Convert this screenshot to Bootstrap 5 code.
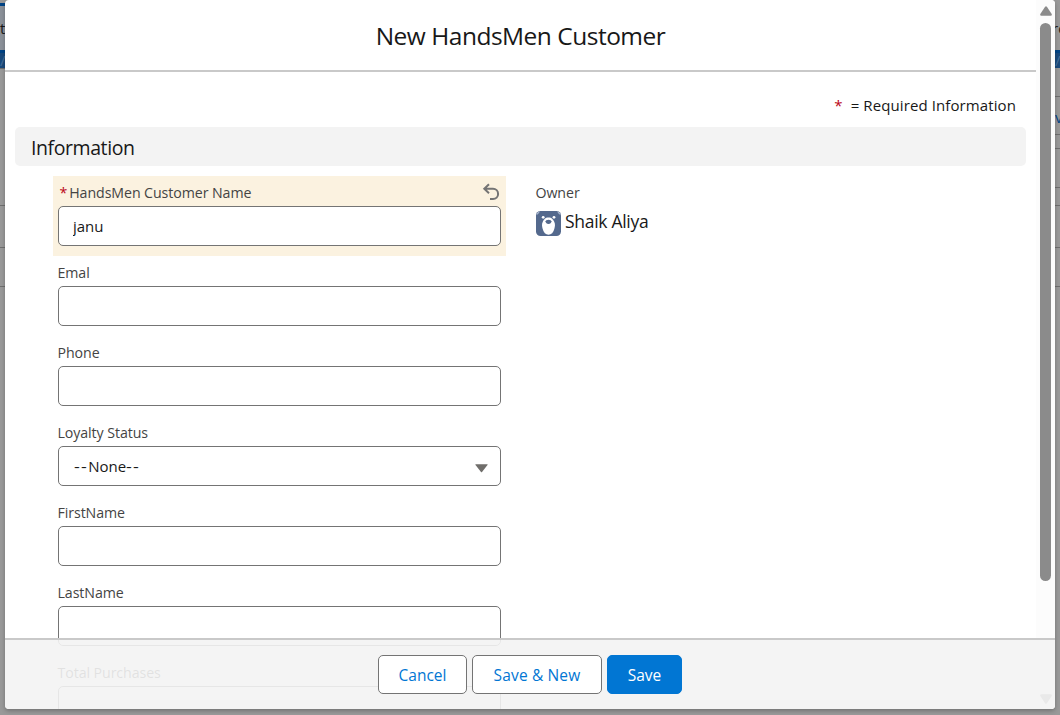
<!DOCTYPE html>
<html lang="en">
<head>
<meta charset="utf-8">
<meta name="viewport" content="width=device-width, initial-scale=1">
<title>New HandsMen Customer</title>
<link href="https://cdn.jsdelivr.net/npm/bootstrap@5.3.0/dist/css/bootstrap.min.css" rel="stylesheet">
<style>
body{font-family:"Open Sans","Noto Sans",sans-serif;background:#999;color:#181818;height:715px;overflow:hidden;font-size:15px;line-height:20px}
.strip{width:5px;height:715px;overflow:hidden;flex:none;background:#999;white-space:nowrap}
.strip>div{flex:none;overflow:hidden}
.s-blue{background:#014486}.s-tab{background:#8b9199}.s-line{background:#6f6f6f;height:1px}.s-band{background:#1a4a7c;color:#456f9b}
.dialog{width:1050px;height:709px;background:#fff;border-radius:4px;box-shadow:0 2px 4px rgba(0,0,0,.25);overflow:hidden}
.dialog-main{width:1031px}
.dialog-head{height:72px;border-bottom:2px solid #c9c9c9;padding-top:18px}
.dialog-head h1{font-size:24.5px;line-height:36px;letter-spacing:-.5px;font-weight:400}
.required-note{height:55px;padding:23px 20px 0 0;font-size:15px;letter-spacing:.1px}
.req{color:#ba0517}
.section-title{margin:0 10px;height:39px;line-height:41px;padding-left:16px;background:#f3f3f3;border-radius:5px;font-size:19.5px;letter-spacing:-.42px;font-weight:400}
.fields{padding:10px 0 0 48px}
.field-cell{width:453px;height:80px;padding:0 5px}
.field-cell.edited{background:#fbf2e0}
.field-label{height:30px;line-height:34px;font-size:14.2px;color:#444;letter-spacing:-.08px;margin-left:-.5px}
.form-control.slds{height:40px;border:1px solid #747474;border-radius:5px;font-size:15px;line-height:20px;padding:9px 14px;color:#181818;background-color:#fff;box-shadow:none}
.select-box{height:40px;border:1px solid #747474;border-radius:5px;padding:0 12px 0 15px;font-size:15px}
.dashes{letter-spacing:1px;display:inline-block;transform:scaleX(1.2);transform-origin:left}
.dashes.lead-in{margin-right:2.500px}
.owner-cell{margin-left:30px}
.owner-name{font-size:17.5px;line-height:24px;letter-spacing:-.3px;padding-top:3px}
.dialog-foot{left:0;right:0;bottom:0;height:71px;border-top:2px solid #c9c9c9;background:rgba(243,243,243,.9);padding:15px 0 0 373px;gap:5px}
.dialog-foot .btn{height:39px;border-radius:5px;font-size:15.5px;line-height:20px;padding:1px 0 0;border:1px solid #747474;background:#fff;color:#0176d3}
.dialog-foot .btn.primary{background:#0176d3;border-color:#0176d3;color:#fff}
.scroller{width:19px;background:#fcfcfc;padding:6px 4px 0;height:709px}
.thumb{width:11px;height:558px;border-radius:6px;background:#8b8b8b;margin-top:6px}
</style>
</head>
<body>
<div class="d-flex">
  <div class="strip d-flex flex-column">
    <div style="height:3px"></div><div class="s-blue" style="height:3px"></div>
    <div class="s-tab" style="height:44px;line-height:44px">t</div>
    <div class="s-blue" style="height:3px"></div><div class="s-band" style="height:15px;line-height:14px">/</div>
    <div class="s-line"></div><div style="height:136px"></div><div class="s-line"></div><div style="height:41px"></div><div class="s-line"></div><div style="height:38px"></div><div class="s-line"></div>
  </div>
  <main class="dialog d-flex position-relative">
    <div class="dialog-main">
      <header class="dialog-head text-center"><h1 class="m-0">New HandsMen Customer</h1></header>
      <div class="required-note text-end"><span class="req me-2">*</span><span>= Required Information</span></div>
      <h2 class="section-title mb-0">Information</h2>
      <div class="fields d-flex">
        <div>
          <div class="field-cell edited">
            <div class="field-label d-flex justify-content-between"><span class="d-flex"><span class="req" style="margin:0 2px 0 2px">*</span><span>HandsMen Customer Name</span></span>
              <svg width="18" height="18" viewBox="0 0 18 18" style="margin:7px 1px 0 0" fill="none" stroke="#747474" stroke-width="2"><path d="M7 1.2 2.3 5.8 7 10.2M2.8 5.8H11a5.1 5.1 0 0 1 0 10.2H8"/></svg>
            </div>
            <input class="form-control slds" value="janu" aria-label="HandsMen Customer Name">
          </div>
          <div class="field-cell"><div class="field-label">Emal</div><input class="form-control slds" aria-label="Emal"></div>
          <div class="field-cell"><div class="field-label">Phone</div><input class="form-control slds" aria-label="Phone"></div>
          <div class="field-cell"><div class="field-label">Loyalty Status</div>
            <div class="select-box d-flex align-items-center justify-content-between"><span><span class="dashes lead-in">--</span>None<span class="dashes">--</span></span><svg width="13" height="9" viewBox="0 0 13 9" style="margin-top:5px"><path d="M.8.3h11.4q.8.1.3.8L7 8q-.5.6-1 0L.5 1.100Q0 .4.800.3z" fill="#706e6b"/></svg></div></div>
          <div class="field-cell"><div class="field-label">FirstName</div><input class="form-control slds" aria-label="FirstName"></div>
          <div class="field-cell"><div class="field-label">LastName</div><input class="form-control slds" aria-label="LastName"></div>
          <div class="field-cell"><div class="field-label">Total Purchases</div><input class="form-control slds" aria-label="Total Purchases"></div>
        </div>
        <div class="owner-cell">
          <div class="field-label">Owner</div>
          <div class="d-flex"><svg width="25" height="25" viewBox="0 0 25 25" style="margin:5px 4px 0 0"><rect width="25" height="25" rx="4.500" fill="#54698d"/><path d="M.5 4Q1 .6 4 .4 2.500 3 .5 4M24.500 4Q24 .6 21 .4 22.500 3 24.500 4" fill="#a9b8d0"/><circle cx="7.200" cy="6.300" r="1.400" fill="#fff"/><circle cx="18" cy="6.300" r="1.400" fill="#fff"/><path d="M12.500 6.600c3.500 0 4.500 2.200 5.600 4 1.500 2.500.8 5.500.2 7.500-.8 3.500-3 5.700-5.800 5.700s-5-2.200-5.800-5.700c-.6-2-1.300-5 .2-7.500 1.100-1.800 2.100-4 5.600-4z" fill="#fff"/><path d="M9.600 10.200q0-1.500 2.900-1.500t2.900 1.500q-.2 2.700-2.900 2.700t-2.900-2.700z" fill="#54698d"/></svg><span class="owner-name">Shaik Aliya</span></div>
        </div>
      </div>
    </div>
    <div class="scroller">
      <svg class="d-block" width="12" height="11" viewBox="0 0 12 11"><path d="M5.100.8q.9-1 1.800 0L11.700 8q.6 1.700-1 1.800H1.300Q-.3 9.700.3 8z" fill="#8b8b8b"/></svg>
      <div class="thumb"></div>
      <svg class="d-block" style="margin-top:113px" width="12" height="11" viewBox="0 0 12 11"><path d="M5.100 9.200q.9 1 1.800 0L11.700 2q.6-1.700-1-1.800H1.300Q-.3.3.3 2z" fill="#8b8b8b"/></svg>
    </div>
    <footer class="dialog-foot position-absolute d-flex">
      <button class="btn" style="width:89px">Cancel</button>
      <button class="btn" style="width:130px;letter-spacing:.15px">Save &amp; New</button>
      <button class="btn primary" style="width:75px">Save</button>
    </footer>
  </main>
  <div class="strip d-flex flex-column">
    <div style="height:50px;line-height:56px"><span style="margin-left:-3px">ro</span></div><div class="s-blue" style="height:3px"></div><div class="s-band" style="height:15px;line-height:15px">/</div>
    <div style="height:28px"></div><div class="s-line"></div><div style="height:37px;line-height:40px;color:#014486">v</div><div class="s-line"></div><div style="height:13px"></div><div class="s-line"></div><div style="height:38px"></div><div class="s-line"></div><div style="height:17px"></div><div class="s-line"></div><div style="height:41px"></div><div class="s-line"></div><div style="height:38px"></div><div class="s-line"></div>
  </div>
</div>
<script src="https://cdn.jsdelivr.net/npm/bootstrap@5.3.0/dist/js/bootstrap.bundle.min.js"></script>
</body>
</html>
